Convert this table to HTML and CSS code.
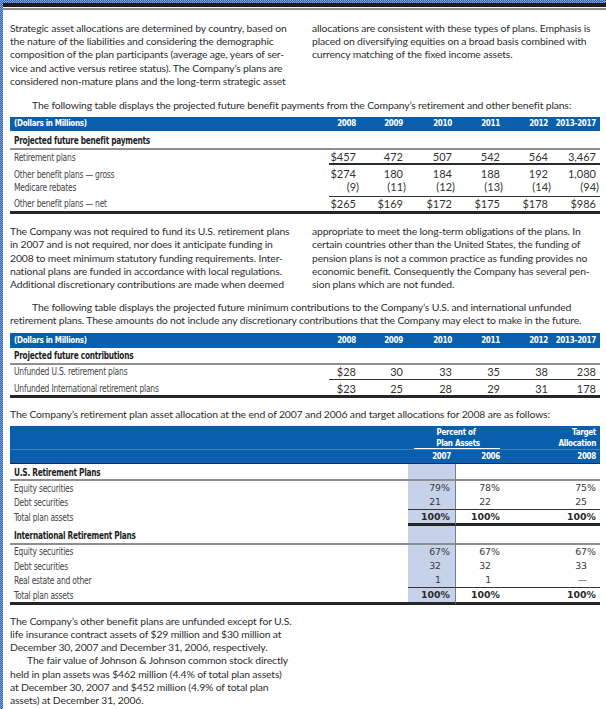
FILE: index.html
```html
<!DOCTYPE html>
<html>
<head>
<meta charset="utf-8">
<link rel="stylesheet" href="styles.css">
</head>
<body>
<div class="page">
  <div class="rule"></div>

  <div class="cols c-top">
    <p>Strategic asset allocations are determined by country, based on<br>the nature of the liabilities and considering the demographic<br>composition of the plan participants (average age, years of ser-<br>vice and active versus retiree status). The Company’s plans are<br>considered non-mature plans and the long-term strategic asset</p>
    <p>allocations are consistent with these types of plans. Emphasis is<br>placed on diversifying equities on a broad basis combined with<br>currency matching of the fixed income assets.</p>
  </div>

  <p class="indent intro1">The following table displays the projected future benefit payments from the Company’s retirement and other benefit plans:</p>

  <table class="fin t1">
    <colgroup><col class="w-lab"><col class="w1"><col class="w2"><col class="w3"><col class="w4"><col class="w4"><col class="w4"></colgroup>
    <thead>
      <tr class="hd hd1"><th class="lab">(Dollars in Millions)</th><th>2008</th><th>2009</th><th>2010</th><th>2011</th><th>2012</th><th>2013-2017</th></tr>
    </thead>
    <tbody>
      <tr class="sec"><td class="lab" colspan="7"><span class="cx">Projected future benefit payments</span></td></tr>
      <tr class="r1-ret"><td class="lab"><span class="cx">Retirement plans</span></td><td class="n">$457</td><td class="n">472</td><td class="n">507</td><td class="n">542</td><td class="n">564</td><td class="n">3,467</td></tr>
      <tr class="r1-gross"><td class="lab"><span class="cx">Other benefit plans — gross</span></td><td class="n">$274</td><td class="n">180</td><td class="n">184</td><td class="n">188</td><td class="n">192</td><td class="n">1,080</td></tr>
      <tr class="r1-med"><td class="lab"><span class="cx">Medicare rebates</span></td><td class="n"><span class="neg">(9)</span></td><td class="n"><span class="neg">(11)</span></td><td class="n"><span class="neg">(12)</span></td><td class="n"><span class="neg">(13)</span></td><td class="n"><span class="neg">(14)</span></td><td class="n"><span class="neg">(94)</span></td></tr>
      <tr class="r1-net"><td class="lab"><span class="cx">Other benefit plans — net</span></td><td class="n">$265</td><td class="n">$169</td><td class="n">$172</td><td class="n">$175</td><td class="n">$178</td><td class="n">$986</td></tr>
    </tbody>
  </table>

  <div class="cols c-mid">
    <p>The Company was not required to fund its U.S. retirement plans<br>in 2007 and is not required, nor does it anticipate funding in<br>2008 to meet minimum statutory funding requirements. Inter-<br>national plans are funded in accordance with local regulations.<br>Additional discretionary contributions are made when deemed</p>
    <p>appropriate to meet the long-term obligations of the plans. In<br>certain countries other than the United States, the funding of<br>pension plans is not a common practice as funding provides no<br>economic benefit. Consequently the Company has several pen-<br>sion plans which are not funded.</p>
  </div>

  <p class="indent intro2">The following table displays the projected future minimum contributions to the Company’s U.S. and international unfunded<br>retirement plans. These amounts do not include any discretionary contributions that the Company may elect to make in the future.</p>

  <table class="fin t2">
    <colgroup><col class="w-lab"><col class="w1"><col class="w2"><col class="w3"><col class="w4"><col class="w4"><col class="w4"></colgroup>
    <thead>
      <tr class="hd hd2"><th class="lab">(Dollars in Millions)</th><th>2008</th><th>2009</th><th>2010</th><th>2011</th><th>2012</th><th>2013-2017</th></tr>
    </thead>
    <tbody>
      <tr class="sec sec2"><td class="lab" colspan="7"><span class="cx">Projected future contributions</span></td></tr>
      <tr class="r2-us"><td class="lab"><span class="cx">Unfunded U.S. retirement plans</span></td><td class="n">$28</td><td class="n">30</td><td class="n">33</td><td class="n">35</td><td class="n">38</td><td class="n">238</td></tr>
      <tr class="r2-int"><td class="lab"><span class="cx">Unfunded International retirement plans</span></td><td class="n">$23</td><td class="n">25</td><td class="n">28</td><td class="n">29</td><td class="n">31</td><td class="n">178</td></tr>
    </tbody>
  </table>

  <p class="intro3">The Company’s retirement plan asset allocation at the end of 2007 and 2006 and target allocations for 2008 are as follows:</p>

  <table class="fin t3">
    <colgroup><col class="w3-lab"><col class="w3-a"><col class="w3-b"><col class="w3-c"></colgroup>
    <thead>
      <tr class="hd h3a"><th class="lab"></th><th colspan="2" class="grp">Percent of</th><th class="tgt">Target</th></tr>
      <tr class="hd h3b"><th class="lab sub"></th><th colspan="2" class="grp"><div class="grp-line">Plan Assets</div></th><th class="tgt sub">Allocation</th></tr>
      <tr class="hd h3c"><th class="lab"></th><th class="ya">2007</th><th class="yb">2006</th><th class="yc">2008</th></tr>
    </thead>
    <tbody>
      <tr class="sec3 s-us"><td class="lab"><span class="cx">U.S. Retirement Plans</span></td><td class="hl"></td><td></td><td></td></tr>
      <tr class="r3 a"><td class="lab"><span class="cx">Equity securities</span></td><td class="hl v">79<span class="pc">%</span></td><td class="v vb">78<span class="pc">%</span></td><td class="v vc">75<span class="pc">%</span></td></tr>
      <tr class="r3 b line1"><td class="lab"><span class="cx">Debt securities</span></td><td class="hl v">21<span class="pc hid">%</span></td><td class="v vb">22<span class="pc hid">%</span></td><td class="v vc">25<span class="pc hid">%</span></td></tr>
      <tr class="r3 c tot"><td class="lab"><span class="cx">Total plan assets</span></td><td class="hl v">100<span class="pc">%</span></td><td class="v vb">100<span class="pc">%</span></td><td class="v vc">100<span class="pc">%</span></td></tr>
      <tr class="sec3 s-int"><td class="lab"><span class="cx">International Retirement Plans</span></td><td class="hl"></td><td></td><td></td></tr>
      <tr class="r3 d"><td class="lab"><span class="cx">Equity securities</span></td><td class="hl v">67<span class="pc">%</span></td><td class="v vb">67<span class="pc">%</span></td><td class="v vc">67<span class="pc">%</span></td></tr>
      <tr class="r3 e"><td class="lab"><span class="cx">Debt securities</span></td><td class="hl v">32<span class="pc hid">%</span></td><td class="v vb">32<span class="pc hid">%</span></td><td class="v vc">33<span class="pc hid">%</span></td></tr>
      <tr class="r3 f line1"><td class="lab"><span class="cx">Real estate and other</span></td><td class="hl v">1<span class="pc hid">%</span></td><td class="v vb">1<span class="pc hid">%</span></td><td class="v vc dash">—<span class="pc hid">%</span></td></tr>
      <tr class="r3 g tot2"><td class="lab"><span class="cx">Total plan assets</span></td><td class="hl v">100<span class="pc">%</span></td><td class="v vb">100<span class="pc">%</span></td><td class="v vc">100<span class="pc">%</span></td></tr>
    </tbody>
  </table>

  <div class="cols c-bot">
    <p>The Company’s other benefit plans are unfunded except for U.S.<br>life insurance contract assets of $29 million and $30 million at<br>December 30, 2007 and December 31, 2006, respectively.<br><span class="ind2"></span>The fair value of Johnson &amp; Johnson common stock directly<br>held in plan assets was $462 million (4.4% of total plan assets)<br>at December 30, 2007 and $452 million (4.9% of total plan<br>assets) at December 31, 2006.</p>
    <div></div>
  </div>
</div>
</body>
</html>
```

FILE: styles.css
```css
html, body { margin: 0; padding: 0; }
body {
  background: repeating-conic-gradient(#2c5fb3 0 25%, #86a9de 0 50%) 0 0 / 2px 2px;
  font-family: Lato, "Open Sans", sans-serif;
  overflow: hidden;
}
.page {
  margin: 3px 0 0 3px;
  background: #fff;
  height: 706px;
  padding: 0 6px 0 7px;
  overflow: hidden;
}
.rule {
  height: 7px;
  margin: 0 -6px 0 -7px;
  background: linear-gradient(#1d1d1d 0 4px, #fff 4px 5px, #8c8c8c 5px 7px);
}
p {
  margin: 0;
  font-size: 10.4px;
  letter-spacing: -0.15px;
  line-height: 13.2px;
  color: #2e2e2e;
  white-space: nowrap;
}
.cols {
  display: grid;
  grid-template-columns: 284px minmax(0, 1fr);
  column-gap: 18px;
}
.cols > * { min-width: 0; }
.c-top { margin-top: 12px; }
.indent { text-indent: 22px; }
.intro1 { margin-top: 11px; }
.c-mid { margin-top: 11px; }
.intro2 { margin-top: 10px; }
.intro3 { margin-top: 10px; }
.c-bot { margin-top: 10px; }
.ind2 { display: inline-block; width: 17px; }

/* tables */
.fin {
  width: 590px;
  table-layout: fixed;
  border-collapse: separate;
  border-spacing: 0;
}
.fin td, .fin th { padding: 0; white-space: nowrap; overflow: visible; }
.t1 { margin-top: 5px; }
.t2 { margin-top: 5px; }
.t3 { margin-top: 5px; }
.w-lab { width: 319px; }
.w1 { width: 31px; }
.w2 { width: 47px; }
.w3 { width: 49px; }
.w4 { width: 48px; }

.hd th {
  background: #0a5fad;
  color: #fff;
  font-family: "Liberation Sans Narrow", "DejaVu Sans Condensed", sans-serif;
  font-weight: bold;
  font-size: 8px;
  letter-spacing: -0.3px;
  text-align: right;
  padding-right: 4px;
}
.hd th.lab { text-align: left; padding-left: 4px; padding-right: 0; }
.hd1 th { height: 14px; line-height: 14px; }
.hd2 th { height: 15px; line-height: 15px; }

.fin td.lab {
  font-family: "Liberation Sans Narrow", "DejaVu Sans Condensed", sans-serif;
  font-size: 10.5px;
  letter-spacing: -0.25px;
  color: #444;
  padding-left: 4px;
}
.cx {
  display: inline-block;
  transform: scaleX(0.8);
  transform-origin: 0 50%;
}
.sec td.lab, .sec3 td.lab {
  font-weight: bold;
  font-size: 10.5px;
  color: #1e1e1e;
  letter-spacing: -0.3px;
}
.sec .cx, .sec3 .cx { transform: scaleX(0.78); }
.fin td.n {
  text-align: right;
  padding-right: 4px;
  font-family: Lato, sans-serif;
  font-size: 11px;
  color: #333;
}
.neg { margin-right: -3px; }

/* table 1 rows */
.sec td { line-height: 15px; padding-top: 2px; border-bottom: 2px solid #8f8f8f; }
.r1-ret td { line-height: 13px; }
.r1-ret td.n { border-bottom: 2px solid #2b2b2b; }
.r1-gross td { line-height: 12px; padding-top: 3px; }
.r1-med td { line-height: 13px; padding-bottom: 3px; }
.r1-med td.n { border-bottom: 1px solid #333; }
.r1-net td { line-height: 13px; padding-bottom: 1px; border-bottom: 3px solid #262626; }

/* table 2 rows */
.sec2 td { line-height: 15px; padding-top: 0; }
.r2-us td { line-height: 13px; padding-bottom: 1px; }
.r2-us td.n { border-bottom: 1px solid #333; }
.r2-int td { line-height: 13px; padding-top: 2px; border-bottom: 3px solid #262626; }

/* table 3 */
.w3-lab { width: 398px; }
.w3-a { width: 48px; }
.w3-b { width: 48px; }
.w3-c { width: 96px; }
.hd th.grp { text-align: center; padding: 0; }
.h3a th { line-height: 13px; }
.h3b th { line-height: 10px; }
.h3b th.sub { border-bottom: 1px solid #3a80c4; }
.h3b th.grp { border-bottom: 1px solid #3a80c4; }
.grp-line { margin: 0 4px 0 6px; border-bottom: 1px solid #fff; line-height: 9px; padding-left: 2px; }
.h3c th { line-height: 13px; border-bottom: 1px solid #2a2a2a; }
.hd th.ya { padding-right: 5px; }
.hd th.yb, .hd th.yc, .hd th.tgt { padding-right: 4px; }

.t3 td.hl { background: #c6d1ea; border-right: 1px solid #6f7f9f; }
.t3 td.v {
  text-align: right;
  padding-right: 5px;
  font-family: "DejaVu Sans", sans-serif;
  font-size: 9.4px;
  color: #3a3a3a;
}
.t3 td.vb, .t3 td.vc { padding-right: 4px; }
.pc.hid { visibility: hidden; }
.sec3 td { border-bottom: 2px solid #8f8f8f; }
.s-us td { line-height: 14px; padding-top: 1px; }
.s-int td { line-height: 15px; padding-top: 2px; }
.r3 td { line-height: 14px; }
.r3.c td, .r3.d td { line-height: 13px; }
.r3.e td { padding-top: 1px; }
.r3.line1 td.v { border-bottom: 1px solid #333; }
.r3.tot td.v { border-bottom: 3px solid #262626; font-weight: bold; color: #2a2a2a; }
.r3.tot2 td { border-bottom: 3px solid #262626; }
.r3.tot2 td.v { font-weight: bold; color: #2a2a2a; }
```
